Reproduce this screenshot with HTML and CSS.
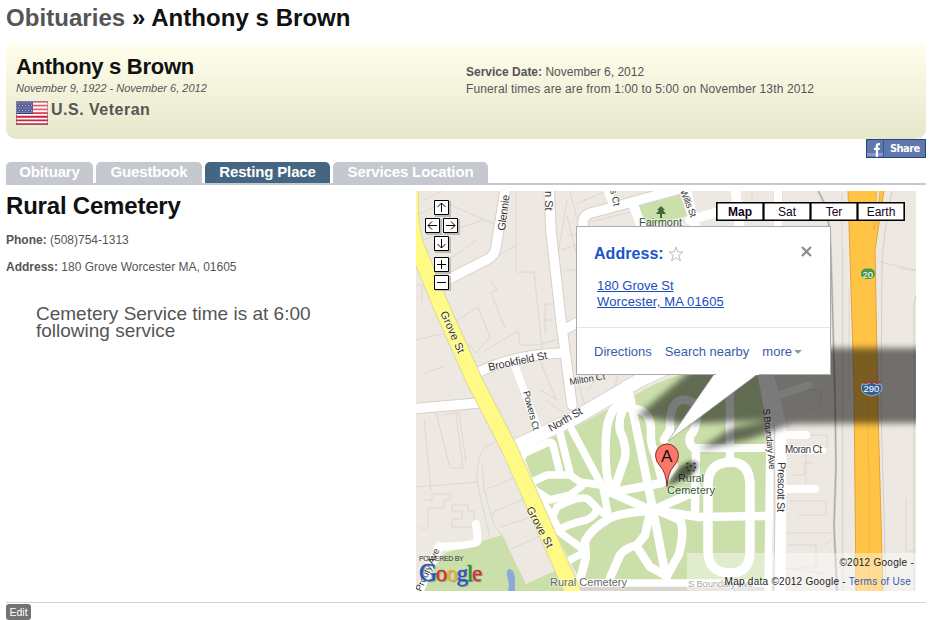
FILE: index.html
```html
<!DOCTYPE html>
<html lang="en">
<head>
<meta charset="utf-8">
<title>Obituaries » Anthony s Brown</title>
<link rel="stylesheet" href="styles.css">
</head>
<body>
<h1 class="crumb"><a>Obituaries</a> » Anthony s Brown</h1>
<header class="banner">
  <div class="person">
    <h2>Anthony s Brown</h2>
    <p class="dates">November 9, 1922 - November 6, 2012</p>
    <p class="veteran">
      <svg class="flag" viewBox="0 0 32 24" width="32" height="24">
        <path fill="#fff" d="M0 0h32v24H0z"/>
        <path stroke="#e33f50" stroke-width="1.85" d="M0 .9h32M0 4.6h32M0 8.3h32M0 12h32"/>
        <path stroke="#c9233b" stroke-width="1.85" d="M0 15.7h32M0 19.4h32M0 23.1h32"/>
        <path fill="#343e87" d="M0 0h17v13H0z"/>
        <path stroke="#aab0d4" stroke-width="1" stroke-dasharray="1 2" d="M1.500 2h15M3 4.500h13M1.500 7h15M3 9.500h13M1.500 11.500h15"/>
        <path fill="none" stroke="#8c6870" stroke-opacity=".7" d="M.5.5h31v23H.5z"/>
        <path fill="#fff" fill-opacity=".18" d="M0 0h32v12H0z"/>
      </svg>
      <span>U.S. Veteran</span>
    </p>
  </div>
  <div class="service">
    <p><b>Service Date:</b> November 6, 2012</p>
    <p class="times">Funeral times are are from 1:00 to 5:00 on November 13th 2012</p>
  </div>
</header>
<div class="sharebar">
  <a class="share">
    <svg viewBox="0 0 16 17" width="16" height="17"><path fill="#8799c4" d="M0 13h16v3H0z"/><path fill="none" stroke="#fff" stroke-width="2.300" d="M13 4.200h-1.200Q9.900 4.200 9.900 6.300V17M7 8.800h5.700"/></svg>
    <span>Share</span>
  </a>
</div>
<nav class="tabs">
  <a class="t1">Obituary</a><a class="t2">Guestbook</a><a class="t3 on">Resting Place</a><a class="t4">Services Location</a>
</nav>
<main class="content">
  <section class="info">
    <h2>Rural Cemetery</h2>
    <p class="phone"><b>Phone:</b> (508)754-1313</p>
    <p class="addr"><b>Address:</b> 180 Grove Worcester MA, 01605</p>
    <p class="note">Cemetery Service time is at 6:00<br>following service</p>
  </section>
  <section class="map">
    <svg class="tiles" viewBox="416 191 500 400" width="500" height="400">
      <defs><filter id="soft" x="-20%" y="-20%" width="140%" height="140%"><feGaussianBlur stdDeviation="3.200"/></filter>
      <filter id="pinsoft" x="-50%" y="-50%" width="200%" height="200%"><feGaussianBlur stdDeviation="2"/></filter></defs>
      <path fill="#ede9e2" d="M416 191h500v400H416z"/>
      <!-- lots and building outlines -->
      <g fill="none" stroke="#dcd7d0" stroke-width="1">
        <path d="M416 216l28-14 50 22M423 240l60-20M424 200l18-9M431 272l47-33M450 325l28-18 12 30-14 16-6-8-12 6-8-12M490 281l7 8-6 4 14 35M516 246l-16 8M516 191v81h18l8 76M484 351l34-20 2 14h18l22-6M416 285h6v17M416 340l30-7M424 374l20-8M424 418l7 73M436 413l14 55h13l-7-55M444 415l15-3 7 50M416 487l62-5M506 436l-22 12q-10 18-6 38l14 60M482 465l2 24 10 36 14 18M487 489l29-12M492 513l36-16M500 527l38-12M511 549l31-14M424 500h8v-6h18v6h-6v8h-16v20h-8M452 505h16v6h6v16h-22v-8h10v-8h-10zM490 415l16 25M545 304v30M558 304h-13M552 320h-9M540 390l18 10M545 400l18 12M536 350l20 50M567 215l12 50M567 235h13M561 250l18-6M566 270h12M570 191l10 40M577 380l9 28 40-16M600 375l-12 15M618 375l-5 18M648 229l30-6M590 222l40-10M604 192l-28 12M567 200l-10 60M752 191v34M842 192v399M849 288v110M843 248v343M880 262l36 8M898 268l18 3M906 498v53h10M808 410l20-8M791 390h30v20M803 435h24v12h-18M806 453v40M792 475h12v-12h10M790 501h36v14h-28M786 533h46M788 545h28v23h-22M824 545l8-6M784 568l42 6M752 360l72-3M822 352l-12 20"/>
        <path d="M892 191q-9 45-10 75l-1 140 5 185M916 295l-2 10v286" stroke="#d3cec7"/>
      </g>
      <path d="M818 191q12 17 13 65l4 140 1 70-2 60 3 65" fill="none" stroke="#cfccc6" stroke-width="2.500"/>
      <path d="M818 191q12 17 13 65l4 140 1 70-2 60 3 65" fill="none" stroke="#a6a6a3" stroke-width="1"/>
      <g fill="#cadfaa">
        <path d="M464 547l38-12 24 49 33-15 13 22H418l27-38zM639 206l41-11 7 21-42 11z"/>
        <path d="M515 455l60-28 80-43 50-19 60 10 3 205H580z"/>
      </g>
      <path fill="#8ba8d9" d="M508 591q2-8-1-15-1-7 3-7 4 1 5 9v13z"/>
      <path fill="#d8d6d1" d="M575 585h200v6H575z"/>
      <!-- streets -->
      <g fill="none" stroke="#d5d1ca" stroke-linejoin="round" stroke-linecap="round">
        <path stroke-width="11.500" d="M506 185l-10 62q-1 8-8 12l-45 23M477 373q35-18 84-20M549 185l2 46 10 90 11 84M410 409l69-6M562 331l25-14M583 235v-12q0-8 8-10l41-11 55-15"/>
        <path stroke-width="15" d="M510 449l65-31 65-38 65-30"/>
        <path stroke-width="8.500" d="M515 366l22 60M778 185v45"/>
      </g>
      <g fill="none" stroke="#fff" stroke-linejoin="round" stroke-linecap="round">
        <path stroke-width="9.500" d="M506 185l-10 62q-1 8-8 12l-45 23M477 373q35-18 84-20M549 185l2 46 10 90 11 84M410 409l69-6M562 331l25-14M583 235v-12q0-8 8-10l41-11 55-15M633 204l9 24M686 190l10 38M690 220l35-10M735 185l5 45"/>
        <path stroke-width="13.500" d="M510 449l65-31 65-38 65-30"/>
        <path stroke-width="8" d="M515 366l22 60M606 187l8 20M778 185v45M476 524q2 14 1 18-3 3-38 5L418 595M766 448h-70M783 435h23M780 450h42M780 489h35"/>
        <path stroke-width="11" d="M755 340q20 50 26 90l-1 165"/>
        <path stroke-width="7.500" d="M753 340q15 60 17 90l-2 160M780 395l29-10M574 583h194"/>
        <circle cx="439" cy="547" r="5"/>
      </g>
      <path fill="none" stroke="#cfcbc4" d="M774 425l1 80-1 85"/>
      <!-- cemetery drives -->
      <g fill="none" stroke="#fff" stroke-width="8.500" stroke-linejoin="round" stroke-linecap="round">
        <path d="M626 385l4 12 23 113 14 72M628 397q-18 10-21 30-3 25 0 48l3 17M631 400q-14 12-11 31 7 15 5 27l-11 32M631 409q19-1 20 20-1 16 4 25l7 26M608 493l54-10 12-17M612 493l41 18M653 510l46-20M660 511l39 6 70-1M664 440l6-10q-1-28 12-30 15-2 15 16-1 14-7 20-2 10 6 13l-1 65M730 375v88"/>
        <path stroke-width="9.500" d="M708 485q0-22 22-23 19 0 20 22v67q0 22-20 22-22 0-22-22z"/>
        <path d="M652 511q-28 1-42 7-18 10-25 23l1 16-6 23M650 513l-5 22-8 10q-12 3-17 10l-10 23M637 547l13 20 17 9 12-22q6-24 1-34l-18-8"/>
        <path stroke-width="7.500" d="M559 469l-6-24q-1-4-6-2l-20 9q-7 3-5 10l8 21 20 30 12 21 22 16M530 483l17-8h23l10 7 20 3 10 6M560 433l10 40M572 430l31 58 5 26M533 489l17 11 20-5 12-9M550 523l7-16q23-12 31-8l8 8q2 8-10 13-22 5-30 12M562 564l23-12M599 510l8 6"/>
      </g>
      <path fill="none" stroke="#ddd9a0" stroke-width="17" d="M411 185q-3 47 9 70l21 51 33 74 35 68 29 65 39 88"/>
      <path fill="none" stroke="#fffa85" stroke-width="15" d="M411 185q-3 47 9 70l21 51 33 74 35 68 29 65 39 88"/>
      <path fill="#ffc345" stroke="#e5a137" d="M848 190l6 198 2 204h27l-5-180-3-162 9-60z"/>
      <path fill="#ede9e2" stroke="#e5a137" stroke-width=".7" d="M877 190l-3 40 3-12 3-28z"/><path d="M867 391l2 90v110" stroke="#edb03a" fill="none" stroke-width=".7"/>
      <!-- trees and place markers -->
      <path fill="#3f693c" d="M661 206l4 4h-2l3 4h-4v4h-2v-4h-4l3-4h-2z"/>
      <g class="lbl">
        <text transform="translate(505 231) rotate(-83)" textLength="36">Glennie</text>
        <text transform="translate(545 191) rotate(90)">n St</text>
        <text transform="translate(610 190) rotate(77)" class="sm">s Ct</text>
        <text transform="translate(680 191) rotate(68)" class="sm" textLength="29">Willis St</text>
        <text transform="translate(440 313) rotate(66)" textLength="45">Grove St</text>
        <text transform="translate(526 509) rotate(62)" textLength="45">Grove St</text>
        <text transform="translate(489 371) rotate(-12)" textLength="60">Brookfield St</text>
        <text transform="translate(570 385) rotate(-9)" class="sm" textLength="36">Milton Ct</text>
        <text transform="translate(523 392) rotate(75)" class="sm" textLength="40">Powers Ct</text>
        <text transform="translate(551 432) rotate(-30)" textLength="37">North St</text>
        <text transform="translate(763 409) rotate(84)" class="sm" textLength="61">S Boundary Ave</text>
        <text transform="translate(778 462) rotate(91)" textLength="50">Prescott St</text>
        <text x="785" y="453" class="md" textLength="37">Moran Ct</text>
        <text transform="translate(421 592) rotate(-66)" class="sm">Prouty Ave</text>
        <text x="639" y="226" class="park" textLength="43">Fairmont</text>
        <text x="678" y="482" class="park" textLength="26">Rural</text>
        <text x="667" y="494" class="park" textLength="48">Cemetery</text>
        <text x="550" y="586" textLength="77" class="dim">Rural Cemetery</text>
        <text x="688" y="587" class="sm dim" textLength="65">S Boundary Ave</text>
      </g>
      <path fill="#fff" fill-opacity=".42" d="M687 553h229v38H687z"/>
      <!-- window and pin shadows -->
      <path filter="url(#soft)" fill="#000" fill-opacity=".52" d="M637 416l33-28 47-40h213v75l-138 1-45 16-48 10 32-22 42-8-90 4-23-4z"/>
      <path filter="url(#pinsoft)" fill="#000" fill-opacity=".6" d="M667 486l12-18q12-11 19-4-2 11-14 15z"/>
      <rect x="861" y="268.500" width="14" height="10.500" rx="5" fill="#4b984c"/><text x="862.500" y="277.500" class="shield">20</text>
      <path fill="#335f9b" stroke="#c5cbd3" stroke-width=".7" d="M862 384q5 2 9.500-2 5 4 9.500 2 4 10-9.500 12-13-2-9.500-12z"/><path stroke="#963f45" stroke-width="2" d="M862.500 382h18"/><text x="863.500" y="392" class="shield">290</text>
      <g stroke="#25352a" stroke-width="2.200" stroke-linecap="round"><path d="M687.500 463.500v0M694.500 463.500v0M687 467.500v0M691 466v0M695 467.500v0M688.500 470.500v0M693.500 470.500v0"/></g>
      <path fill="#fff" stroke="#a5a5a5" stroke-width=".8" d="M715 373l-47 68 91-68z"/>
      <path fill="#fe7569" stroke="#852f2b" stroke-width="1" d="M667 486.500q-.8-14-7-20.500-4.500-5-4.500-10.500a11.500 11.500 0 0 1 23 0q0 5.500-4.500 10.500-6.200 6.500-7 20.500z"/>
      <text x="661" y="461.500" class="pin">A</text>
    </svg>
    <div class="pad">
      <svg viewBox="424 199 36 92" width="36" height="92">
        <path fill="#aaa" d="M435 201h16v16h-16zM426 219h16v16h-16zM444 219h16v16h-16zM435 237h16v16h-16zM435 258h16v16h-16zM435 276h16v16h-16z" fill-opacity=".7"/>
        <path fill="#fff" stroke="#000" d="M434.500 200.500h14v14h-14zM425.500 218.500h14v14h-14zM443.500 218.500h14v14h-14zM434.500 236.500h14v14h-14zM434.500 257.500h14v14h-14zM434.500 275.500h14v14h-14z"/>
        <path fill="none" stroke="#000" d="M441.500 212v-9M437.500 207l4-4 4 4M437 225.500h-9M432 221.500l-4 4 4 4M446 225.500h9M451 221.500l4 4-4 4M441.500 239v9M437.500 244l4 4 4-4M437 264.500h9M441.500 260v9M437 282.500h9"/>
      </svg>
    </div>
    <div class="types"><a class="cur">Map</a><a>Sat</a><a>Ter</a><a>Earth</a></div>
    <div class="bubble">
      <div class="bhead"><b>Address:</b>
        <svg class="star" viewBox="0 0 16 16" width="16" height="16"><path fill="#fff" stroke="#bcbcbc" d="M8 1l1.800 5H15l-4.200 3.300L12.500 15 8 11.500 3.500 15l1.700-5.700L1 6h5.200z"/></svg>
        <svg class="close" viewBox="0 0 11 11" width="11" height="11"><path stroke="#8c8c8c" stroke-width="2.200" d="M1 1l9 9M10 1l-9 9"/></svg>
      </div>
      <div class="baddr"><a>180 Grove St</a><br><a class="city">Worcester, MA 01605</a></div>
      <div class="bfoot"><a>Directions</a><a class="near">Search nearby</a><a>more<i></i></a></div>
    </div>
    <div class="brand"><span class="pow">POWERED BY</span><span class="goog"><i class="b">G</i><i class="r">o</i><i class="y">o</i><i class="b">g</i><i class="g">l</i><i class="r">e</i></span></div>
    <div class="legal"><p>©2012 Google -</p><p class="l2">Map data ©2012 Google - <a>Terms of Use</a></p></div>
  </section>
</main>
<footer class="foot"><a>Edit</a></footer>
</body>
</html>
```
FILE: styles.css
```css
* { box-sizing: border-box; }
body { margin: 0; padding: 0 6px; width: 932px; height: 620px; overflow: hidden; background: #fff; color: #555; font: 12px/17px "Liberation Sans", Arial, sans-serif; }
h1, h2, p { margin: 0; }
p, h1, h2, a, span { white-space: nowrap; }
.crumb { height: 42px; padding-top: 4px; font-size: 24px; line-height: 28px; letter-spacing: .05px; color: #111; }
.crumb a { color: #555; }
.banner { display: flex; height: 97px; padding: 12px 10px 0; border-radius: 10px; background: linear-gradient(#fffff4, #fdfdea 8%, #e7e7cc); }
.person { width: 450px; }
.person h2 { font-size: 22px; line-height: 26px; letter-spacing: -.28px; color: #111; }
.dates { margin-top: 2px; font-size: 11px; line-height: 13px; font-style: italic; }
.veteran { display: flex; gap: 3px; margin-top: 6px; font-size: 16px; font-weight: bold; line-height: 18px; letter-spacing: .5px; }
.flag { display: block; }
.service { padding-top: 9px; }
.service p { line-height: 18px; margin-bottom: -1px; }
.times { letter-spacing: .13px; }
.sharebar { display: flex; justify-content: flex-end; height: 23px; }
.share { display: flex; width: 60px; height: 19px; border: 1px solid #29447e; background: #5f78ab; color: #fff; font: bold 10px/17px "DejaVu Sans", sans-serif; }
.share svg { width: 17px; border-right: 1px solid #3c568d; }
.share span { padding-left: 6px; letter-spacing: -.6px; }
.tabs { display: flex; gap: 3px; height: 23px; border-bottom: 2px solid #c5c8cf; }
.tabs a { height: 21px; border-radius: 5px 5px 0 0; background: #c5c8cf; color: #fff; font-size: 15px; font-weight: bold; line-height: 20px; letter-spacing: -.15px; text-align: center; }
.tabs .on { background: #446682; }
.t1 { width: 87px; }
.t2 { width: 106px; }
.t3 { width: 125px; }
.t4 { width: 155px; }
.content { display: flex; height: 418px; padding-top: 6px; border-bottom: 1px solid #d4d4d4; }
.info { width: 410px; }
.info h2 { font-size: 24px; line-height: 30px; letter-spacing: -.2px; color: #111; }
.phone { margin-top: 11px; }
.addr { margin-top: 10px; }
.note { margin: 29px 0 0 30px; font-size: 19px; line-height: 17px; }
.map { position: relative; width: 500px; height: 400px; overflow: hidden; }
.tiles { display: block; }
.lbl { font-size: 11px; fill: #333; stroke: #fff; stroke-width: 2px; stroke-opacity: .45; paint-order: stroke; }
.sm { font-size: 9.500px; }
.md { font-size: 10px; }
.park { fill: #355537; }
.dim { fill: #666; }
.shield { fill: #fff; font-size: 9.500px; }
.pin { fill: #111; font-size: 17px; }
.pad { position: absolute; left: 8px; top: 8px; }
.types { position: absolute; left: 300px; top: 11px; display: flex; }
.types a { width: 47px; height: 19px; margin-right: -1px; border: 1px solid #000; box-shadow: inset 0 0 0 .6px #000; background: #fff; color: #102; font-size: 12px; line-height: 18px; text-align: center; flex: none; }
.types a + a { width: 48px; }
.types .cur { width: 48px; font-weight: bold; }
.bubble { position: absolute; left: 160px; top: 35px; width: 255px; height: 149px; border: 1px solid #ababab; background: #fff; padding: 17px 17px 0; color: #1b4dbb; font-size: 13px; }
.bubble::after { content: ""; position: absolute; left: 138.5px; bottom: -1px; width: 43px; height: 1px; background: #fff; }
.bhead { display: flex; align-items: center; height: 20px; font-size: 16px; line-height: 20px; }
.bhead b { color: #1b55c8; letter-spacing: .05px; }
.star { margin-left: 4px; }
.close { margin: -5px 0 0 117px; }
.baddr { padding: 14px 0 0 3px; line-height: 16px; text-decoration: underline; }
.city { letter-spacing: .15px; }
.bfoot { display: flex; gap: 13px; margin: 17px -17px 0; padding: 15px 17px 0; border-top: 1px solid #e4e4e4; font-size: 13px; color: #3b5bab; line-height: 18px; }
.bfoot i { display: inline-block; margin-left: 2px; border: 4px solid transparent; border-top-color: #999; border-bottom: 0; vertical-align: 2px; }
.brand { position: absolute; left: 3px; top: 363px; display: flex; flex-direction: column; }
.pow { font-size: 7px; line-height: 9px; letter-spacing: -.3px; color: #333; }
.goog { height: 26px; font: 23px/19px "Liberation Serif", serif; letter-spacing: -1.2px; -webkit-text-stroke: .4px; text-shadow: 1px 1px 1px #888; }
.goog i { font-style: normal; }
.goog i:first-child { font-size: 25px; }
.b { color: #2357bd; } .r { color: #d13232; } .y { color: #e7b42a; } .g { color: #23933b; }
.legal { position: absolute; right: 5px; top: 362px; font-size: 10px; line-height: 19px; color: #222; text-align: right; letter-spacing: .27px; }
.legal p:first-child { margin-right: -3px; }
.legal a { color: #3359b0; }
.foot { padding-top: 1px; }
.foot a { display: block; width: 25px; height: 16px; border-radius: 3px; background: #737373; color: #fff; font-size: 10.500px; line-height: 17px; text-align: center; }
```
